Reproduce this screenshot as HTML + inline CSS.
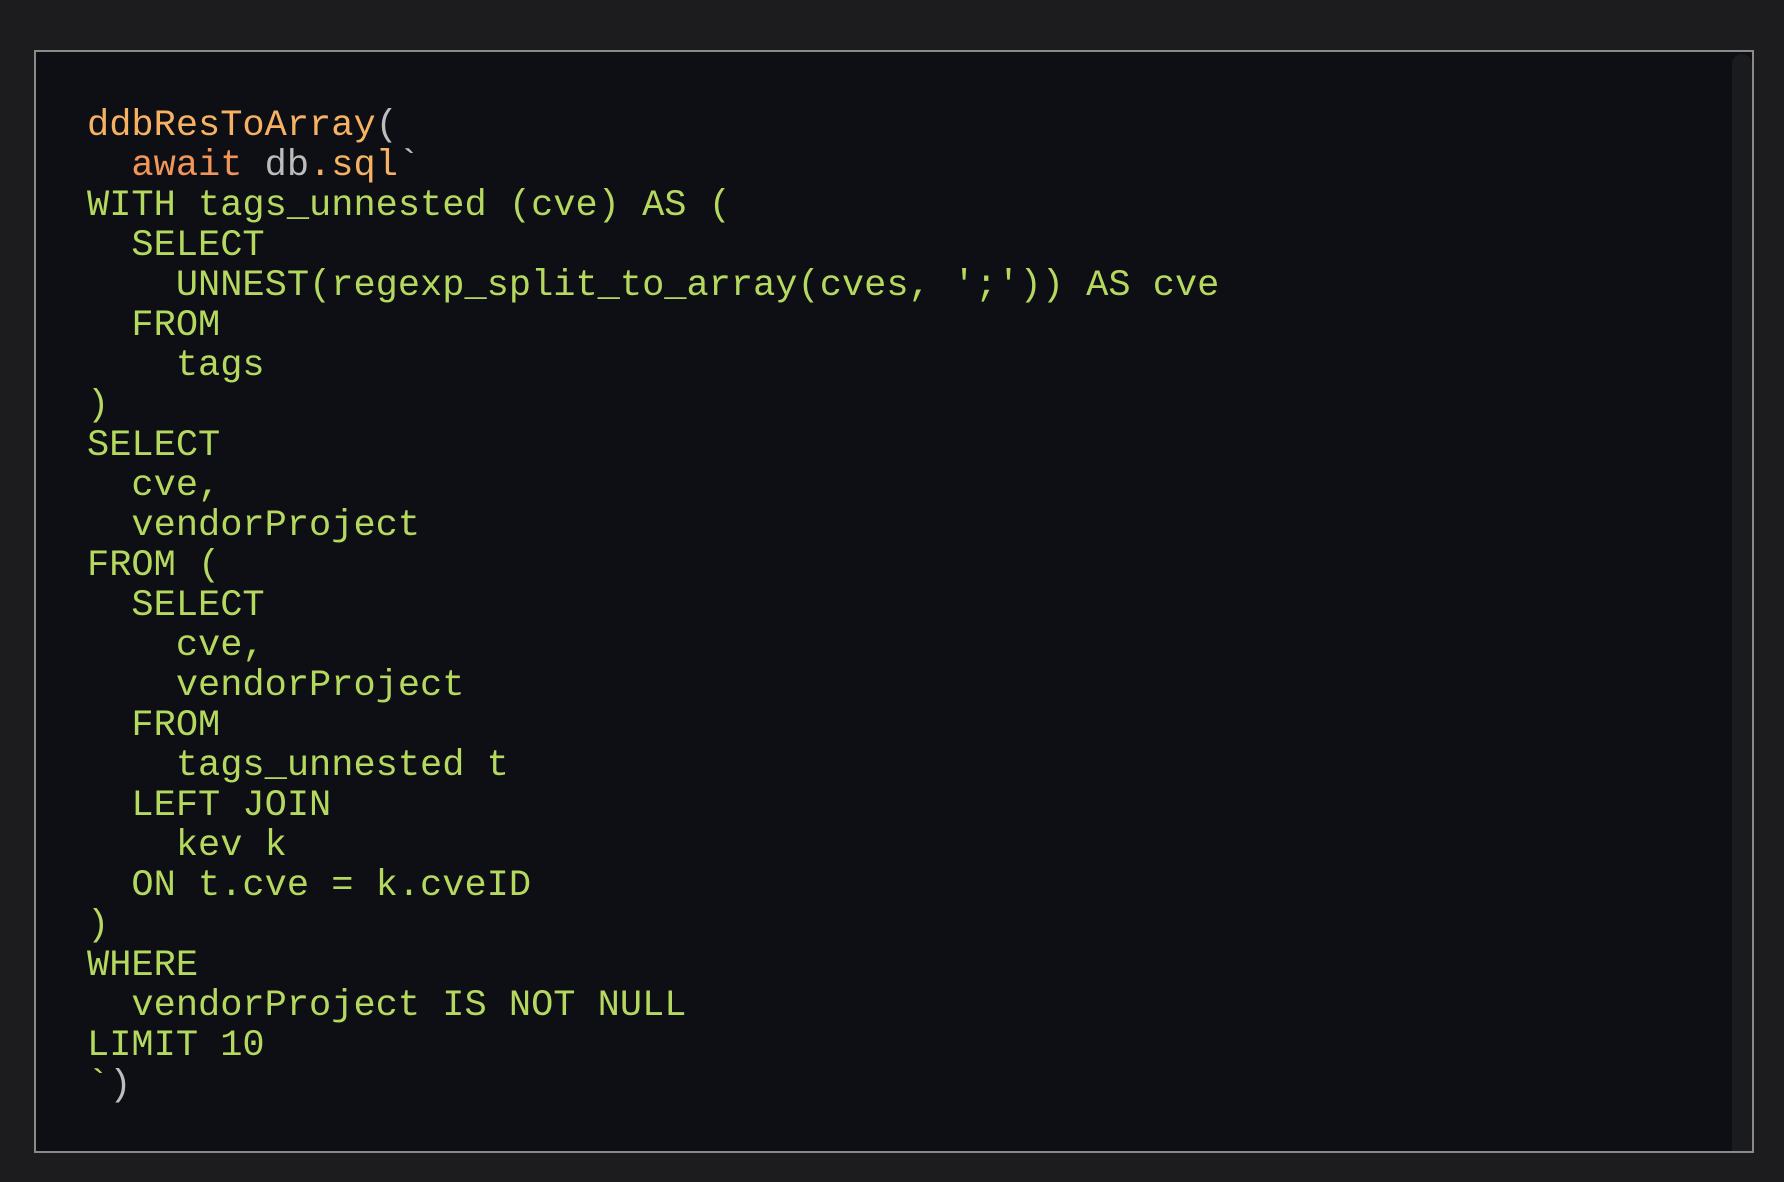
<!DOCTYPE html>
<html><head><meta charset="utf-8"><style>
html,body{margin:0;padding:0;background:#1c1c1e;width:1784px;height:1182px;overflow:hidden}
.box{position:absolute;left:34px;top:50px;width:1716px;height:1099px;border:2px solid #8a8a8a;background:#0e0f14}
.sb{position:absolute;right:0;top:2px;width:20px;bottom:0;background:#1a1b1f;border-radius:10px 10px 0 0}
pre{position:absolute;left:51px;top:54px;margin:0;font-family:"Liberation Mono",monospace;font-size:37px;line-height:40px;color:#b5d95f;letter-spacing:0}
.o{color:#f6b163}.a{color:#f19558}.g{color:#bdbdbd}
</style></head><body>
<div class="box"><div class="sb"></div>
<pre><span class="o">ddbResToArray</span><span class="g">(</span>
  <span class="a">await</span> <span class="g">db</span><span class="o">.sql</span><span class="g">`</span>
WITH tags_unnested (cve) AS (
  SELECT
    UNNEST(regexp_split_to_array(cves, ';')) AS cve
  FROM
    tags
)
SELECT
  cve,
  vendorProject
FROM (
  SELECT
    cve,
    vendorProject
  FROM
    tags_unnested t
  LEFT JOIN
    kev k
  ON t.cve = k.cveID
)
WHERE
  vendorProject IS NOT NULL
LIMIT 10
`<span class="g">)</span></pre>
</div>
</body></html>
